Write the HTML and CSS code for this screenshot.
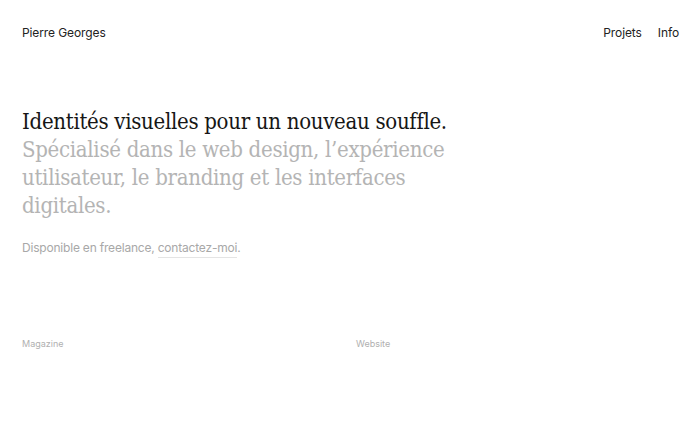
FILE: index.html
```html
<!DOCTYPE html>
<html lang="fr">
<head>
<meta charset="utf-8">
<title>Pierre Georges</title>
<link rel="stylesheet" href="styles.css">
</head>
<body>
<header class="site-header">
  <a class="brand" href="#">Pierre Georges</a>
  <nav class="nav">
    <a href="#">Projets</a>
    <a href="#">Info</a>
  </nav>
</header>
<main class="main">
  <section class="intro">
    <h1 class="headline"><span class="lead">Identités visuelles pour un nouveau souffle.</span> <span class="muted">Spécialisé dans le web design, l’expérience utilisateur, le branding et les interfaces digitales.</span></h1>
    <p class="availability">Disponible en freelance, <a href="#" class="link">contactez-moi</a>.</p>
  </section>
  <section class="projects">
    <div class="project"><span class="label">Magazine</span></div>
    <div class="project"><span class="label">Website</span></div>
  </section>
</main>
</body>
</html>
```
FILE: styles.css
```css
* { box-sizing: border-box; }
html, body { margin: 0; padding: 0; background: #fff; }
body {
  font-family: Inter, "Liberation Sans", sans-serif;
  color: #222;
  -webkit-font-smoothing: antialiased;
}
a { color: inherit; text-decoration: none; }
.site-header {
  display: flex;
  justify-content: space-between;
  align-items: center;
  padding: 24px 21px 0 22px;
  height: 40px;
  font-size: 12px;
  letter-spacing: -0.1px;
}
.nav { display: flex; gap: 16px; }
.main { padding: 0 22px; }
.intro { padding-top: 68px; }
.headline {
  margin: 0;
  font-family: "DejaVu Serif Condensed", "DejaVu Serif", serif;
  font-weight: 400;
  font-size: 22px;
  line-height: 28px;
  color: #161616;
  max-width: 440px;
  letter-spacing: -0.3px;
}
.lead { display: block; white-space: nowrap; }
.muted { display: block; color: #b4b4b4; }
.availability {
  margin: 20px 0 0;
  font-size: 12px;
  letter-spacing: -0.2px;
  color: #a8a8a8;
}
.link { border-bottom: 1px solid #e4e4e4; padding-bottom: 2px; }
.projects {
  display: grid;
  grid-template-columns: 1fr 1fr;
  column-gap: 12px;
  margin-top: 76px;
}
.label { font-size: 9px; color: #b0b0b0; }
```
